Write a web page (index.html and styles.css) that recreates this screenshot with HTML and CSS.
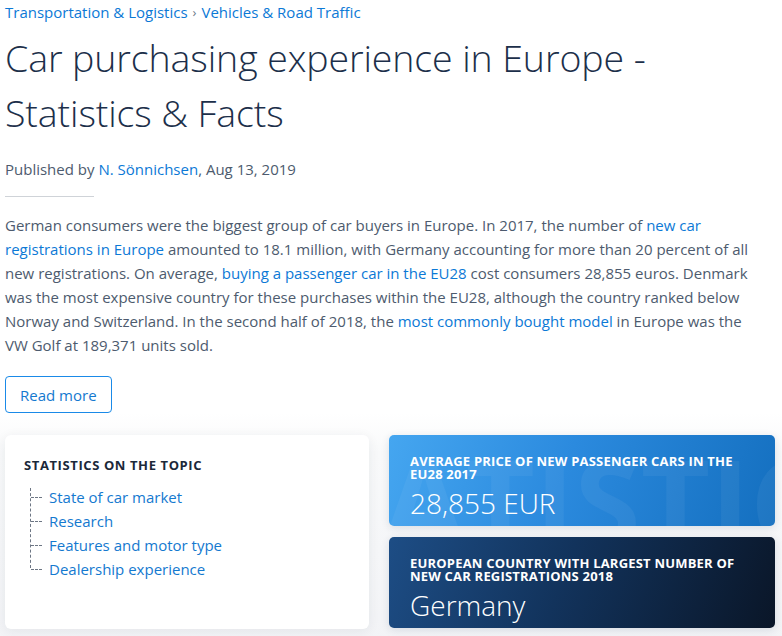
FILE: index.html
```html
<!DOCTYPE html>
<html lang="en">
<head>
<meta charset="utf-8">
<title>Car purchasing experience in Europe - Statistics &amp; Facts</title>
<link rel="stylesheet" href="styles.css">
</head>
<body>
<div class="page">
  <header class="top">
    <nav class="crumbs">
      <a href="#">Transportation &amp; Logistics</a>
      <span class="sep">›</span>
      <a href="#">Vehicles &amp; Road Traffic</a>
    </nav>
    <h1 class="title">Car purchasing experience in Europe - Statistics &amp; Facts</h1>
    <p class="byline">Published by <a href="#">N. Sönnichsen</a>, Aug 13, 2019</p>
    <hr class="rule">
    <p class="intro">German consumers were the biggest group of car buyers in Europe. In 2017, the number of <a href="#">new car registrations in Europe</a> amounted to 18.1 million, with Germany accounting for more than 20 percent of all new registrations. On average, <a href="#">buying a passenger car in the EU28</a> cost consumers 28,855 euros. Denmark was the most expensive country for these purchases within the EU28, although the country ranked below Norway and Switzerland. In the second half of 2018, the <a href="#">most commonly bought model</a> in Europe was the VW Golf at 189,371 units sold.</p>
    <a class="btn" href="#">Read more</a>
  </header>
  <section class="lower">
    <div class="topics">
      <h2 class="topics-title">Statistics on the topic</h2>
      <ul class="tree">
        <li><a href="#">State of car market</a></li>
        <li><a href="#">Research</a></li>
        <li><a href="#">Features and motor type</a></li>
        <li><a href="#">Dealership experience</a></li>
      </ul>
    </div>
    <div class="cards">
      <div class="card card-blue">
        <span class="mark">STATISTIC</span>
        <h3 class="card-title">Average price of new passenger cars in the EU28 2017</h3>
        <p class="card-value">28,855 EUR</p>
      </div>
      <div class="card card-dark">
        <h3 class="card-title">European country with largest number of new car registrations 2018</h3>
        <p class="card-value">Germany</p>
      </div>
    </div>
  </section>
</div>
</body>
</html>
```
FILE: styles.css
```css
html, body {
  margin: 0;
  padding: 0;
  background: #ffffff;
}
body {
  font-family: "Open Sans", "Liberation Sans", sans-serif;
  color: #4d5b6e;
  width: 782px;
  height: 636px;
  overflow: hidden;
}
a {
  color: #0c79d6;
  text-decoration: none;
}
.page {
  display: flex;
  flex-direction: column;
}
.top {
  padding: 0 22px 0 5px;
  display: flex;
  flex-direction: column;
  align-items: flex-start;
}
.crumbs {
  font-size: 15px;
  line-height: 20px;
  padding-top: 2px;
  display: flex;
  gap: 5px;
}
.crumbs .sep {
  color: #6d7a8a;
  font-size: 13px;
}
.title {
  margin: 8px 0 0;
  font-weight: 300;
  font-size: 37.5px;
  line-height: 55px;
  color: #1c2f4a;
  letter-spacing: -0.1px;
}
.byline {
  margin: 19px 0 0;
  font-size: 15px;
  line-height: 20px;
  color: #4d5b6e;
}
.rule {
  width: 89px;
  margin: 17px 0 0;
  border: 0;
  border-top: 1px solid #cfd3d8;
}
.intro {
  margin: 16px 0 0;
  font-size: 15px;
  line-height: 24px;
  color: #4d5b6e;
}
.btn {
  margin-top: 19px;
  box-sizing: border-box;
  height: 37px;
  padding: 0 14px;
  display: flex;
  align-items: center;
  border: 1px solid #1a8ae8;
  border-radius: 4px;
  font-size: 15px;
  color: #1479cf;
}
.lower {
  margin-top: 0;
  padding: 22px 7px 20px 5px;
  display: grid;
  grid-template-columns: 364px 386px;
  column-gap: 20px;
  background: linear-gradient(to bottom, #ffffff 0, #f8f9fa 40px, #f2f3f6 100%);
}
.topics {
  background: #ffffff;
  border-radius: 6px;
  box-shadow: 0 2px 12px rgba(30, 40, 60, 0.07);
  padding: 22px 19px 30px;
  height: 194px;
  box-sizing: border-box;
}
.topics-title {
  margin: 0;
  font-size: 13px;
  line-height: 16px;
  font-weight: 700;
  letter-spacing: 0.6px;
  text-transform: uppercase;
  color: #1b2839;
}
.tree {
  list-style: none;
  margin: 12px 0 0 6px;
  padding: 0;
  position: relative;
}
.tree::before {
  content: "";
  position: absolute;
  left: 0;
  top: 3px;
  height: 80px;
  border-left: 1px dashed #6d7684;
}
.tree li {
  position: relative;
  padding-left: 19px;
  font-size: 15px;
  line-height: 24px;
}
.tree li::before {
  content: "";
  position: absolute;
  left: 1px;
  top: 12px;
  width: 11px;
  border-top: 1px dashed #6d7684;
}
.tree a {
  color: #1479cf;
}
.cards {
  display: flex;
  flex-direction: column;
  gap: 11px;
}
.card {
  position: relative;
  overflow: hidden;
  border-radius: 5px;
  height: 91px;
  box-sizing: border-box;
  padding: 20px 21px 0;
  color: #ffffff;
  box-shadow: 0 2px 8px rgba(20, 40, 70, 0.12);
}
.card-blue {
  background: linear-gradient(110deg, #45a6f0 0%, #2b8ade 45%, #146fbf 100%);
}
.card-dark {
  background: linear-gradient(110deg, #1d4d85 0%, #12335c 45%, #0a1628 100%);
}
.mark {
  position: absolute;
  left: -142px;
  top: 6px;
  font-size: 120px;
  line-height: 120px;
  font-weight: 700;
  letter-spacing: 0;
  color: rgba(255, 255, 255, 0.05);
  white-space: nowrap;
}
.card-title {
  position: relative;
  margin: 0;
  font-size: 13px;
  line-height: 13px;
  font-weight: 700;
  text-transform: uppercase;
  letter-spacing: 0.2px;
}
.card-value {
  position: relative;
  margin: 4px 0 0;
  font-size: 28px;
  line-height: 36px;
  font-weight: 300;
}
```
